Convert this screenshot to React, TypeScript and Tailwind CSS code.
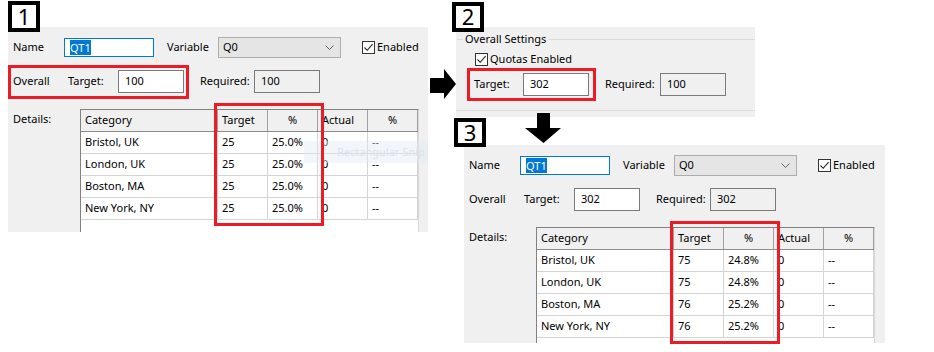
import clsx from "clsx";
import { FC } from "react";

type Row = { category: string; target: string; pct: string };

const rowsBefore: Row[] = [
  { category: "Bristol, UK", target: "25", pct: "25.0%" },
  { category: "London, UK", target: "25", pct: "25.0%" },
  { category: "Boston, MA", target: "25", pct: "25.0%" },
  { category: "New York, NY", target: "25", pct: "25.0%" },
];

const rowsAfter: Row[] = [
  { category: "Bristol, UK", target: "75", pct: "24.8%" },
  { category: "London, UK", target: "75", pct: "24.8%" },
  { category: "Boston, MA", target: "76", pct: "25.2%" },
  { category: "New York, NY", target: "76", pct: "25.2%" },
];

const Check: FC<{ className?: string }> = ({ className }) => (
  <span className={clsx("flex h-[13px] w-[13px] items-center justify-center border border-[#333333] bg-white", className)}>
    <svg width="11" height="11" viewBox="0 0 11 11" fill="none">
      <path d="M1.5 5.5 L4.2 8.3 L9.6 2.2" stroke="#222222" strokeWidth="1.1" />
    </svg>
  </span>
);

const StepBox: FC<{ n: string; className: string }> = ({ n, className }) => (
  <div
    className={clsx(
      "absolute z-20 flex items-center justify-center border-4 border-black bg-white pb-[2px] text-[22px] leading-none text-black",
      className
    )}
  >
    {n}
  </div>
);

const ValueBox: FC<{ value: string; readOnly?: boolean; className?: string }> = ({ value, readOnly, className }) => (
  <div
    className={clsx(
      "flex h-[23px] items-center border border-[#7a7a7a] pl-[6px]",
      readOnly ? "bg-[#f0f0f0]" : "bg-white",
      className
    )}
  >
    {value}
  </div>
);

const QuotaPanel: FC<{ target: string; rows: Row[]; className: string; overallBox?: boolean; snip?: boolean }> = ({
  target,
  rows,
  className,
  overallBox,
  snip,
}) => (
  <div className={clsx("absolute flex flex-col bg-[#f0f0f0] pl-[5px] pt-[10px]", className)}>
    <div className="flex h-[21px] items-center">
      <span className="w-[51px]">Name</span>
      <div className="flex h-[19px] w-[90px] items-center border border-[#0078d7] bg-white pl-[5px]">
        <span className="bg-[#0078d7] leading-[15px] text-white">QT1</span>
      </div>
      <span className="ml-[13px] w-[51px]">Variable</span>
      <div className="flex h-[21px] w-[123px] items-center justify-between border border-[#adadad] bg-[#e5e5e5] pl-[4px] pr-[6px]">
        <span>Q0</span>
        <svg width="9" height="5" viewBox="0 0 9 5" fill="none">
          <path d="M0.5 0.5 L4.5 4.5 L8.5 0.5" stroke="#606060" strokeWidth="1" />
        </svg>
      </div>
      <Check className="ml-[21px]" />
      <span className="ml-[2px]">Enabled</span>
    </div>

    <div className="mt-[12px] flex h-[23px] items-center">
      <span className="w-[55px]">Overall</span>
      <span className="w-[50px]">Target:</span>
      <ValueBox value={target} className="w-[66px]" />
      <span className="ml-[16px] w-[54px]">Required:</span>
      <ValueBox value={target} readOnly className="w-[66px]" />
    </div>

    <div className="mt-[16px] flex min-h-0 flex-1">
      <span className="w-[67px] pt-[2px]">Details:</span>
      <div className="w-[339px] overflow-hidden border-l border-r border-t border-l-[#828282] border-r-[#d9d9d9] border-t-[#828282] bg-white">
        <div className="flex h-[22px] border-b border-[#8c8c8c] bg-[#f0f0f0]">
          <div className="flex w-[137px] items-center border-r border-[#a0a0a0] pl-[4px]">Category</div>
          <div className="flex w-[50px] items-center border-r border-[#a0a0a0] pl-[4px]">Target</div>
          <div className="flex w-[50px] items-center justify-center border-r border-[#a0a0a0]">%</div>
          <div className="flex w-[50px] items-center border-r border-[#a0a0a0] pl-[4px]">Actual</div>
          <div className="flex w-[50px] items-center justify-center border-r border-[#a0a0a0]">%</div>
        </div>
        {rows.map((r) => (
          <div key={r.category} className="flex h-[22px] border-b border-[#d4d4d4]">
            <div className="flex w-[137px] items-center border-r border-[#d4d4d4] pl-[4px]">{r.category}</div>
            <div className="flex w-[50px] items-center border-r border-[#d4d4d4] pl-[4px]">{r.target}</div>
            <div className="flex w-[50px] items-center border-r border-[#d4d4d4] pl-[4px]">{r.pct}</div>
            <div className="flex w-[50px] items-center border-r border-[#d4d4d4] pl-[4px]">0</div>
            <div className="flex w-[50px] items-center border-r border-[#d4d4d4] pl-[4px]">--</div>
          </div>
        ))}
      </div>
    </div>

    {snip && (
      <div className="absolute left-[296px] top-[114px] flex h-[22px] w-[124px] items-center bg-[#e3ecf6]/45 pl-[33px] text-[#dbe2ea]">
        Rectangular Snip
      </div>
    )}
    {overallBox && <div className="absolute left-0 top-[38px] h-[34px] w-[181px] border-[3px] border-[#ed1c24]" />}
    <div className="absolute left-[206px] top-[76px] h-[123px] w-[110px] border-[3px] border-[#ed1c24]" />
  </div>
);

export default function App() {
  return (
    <div className="relative h-[352px] w-[934px] overflow-hidden bg-white font-['Noto_Sans',sans-serif] text-[11px] text-black">
      <StepBox n="1" className="left-[8px] top-[1px] h-[31px] w-[32px]" />
      <QuotaPanel target="100" rows={rowsBefore} overallBox snip className="left-[8px] top-[27px] h-[205px] w-[420px]" />

      <StepBox n="2" className="left-[452px] top-[2px] h-[30px] w-[32px]" />
      <div className="absolute left-[456px] top-[27px] flex h-[90px] w-[299px] flex-col bg-[#f0f0f0] pt-[4px]">
        <div className="flex h-[16px] items-center">
          <div className="ml-[1px] h-px w-[6px] bg-[#dcdcdc]" />
          <span className="px-[2px]">Overall Settings</span>
          <div className="h-px flex-1 bg-[#dcdcdc]" />
        </div>
        <div className="ml-[19px] mt-[6px] flex h-[13px] items-center">
          <Check />
          <span className="ml-[2px]">Quotas Enabled</span>
        </div>
        <div className="ml-[11px] mt-[2px] flex h-[33px] items-center">
          <div className="flex h-[33px] w-[129px] items-center border-[3px] border-[#ed1c24] pl-[4px]">
            <span className="w-[49px]">Target:</span>
            <ValueBox value="302" className="w-[66px]" />
          </div>
          <span className="ml-[9px] w-[55px]">Required:</span>
          <ValueBox value="100" readOnly className="w-[66px]" />
        </div>
        <div className="mt-[9px] h-px w-full bg-[#dcdcdc]" />
      </div>

      <StepBox n="3" className="left-[454px] top-[118px] h-[29px] w-[32px]" />
      <QuotaPanel target="302" rows={rowsAfter} className="left-[464px] top-[145px] h-[198px] w-[421px]" />

      <svg className="absolute left-0 top-0" width="934" height="352" viewBox="0 0 934 352">
        <path d="M430 78 H444 V69 L456 84 L444 99 V93 H430 Z" fill="#000" />
        <path d="M537 113 H550 V128 H561 L543.5 143 L525 128 H537 Z" fill="#000" />
      </svg>
    </div>
  );
}
